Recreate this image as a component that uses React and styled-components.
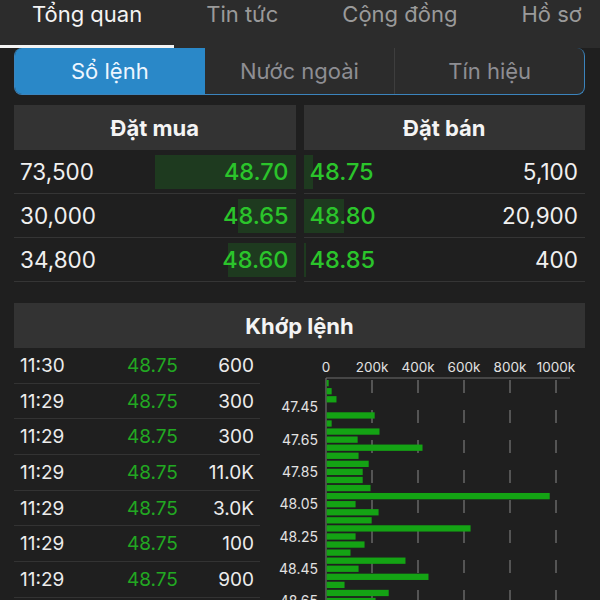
import styled, { createGlobalStyle } from "styled-components";

const GlobalStyle = createGlobalStyle`
  body {
    margin: 0;
    background: #1f1f1f;
    font-family: Inter, "Noto Sans", sans-serif;
    color: #f2f2f2;
  }
`;

const TABS = [
    { label: "Tổng quan", active: true },
    { label: "Tin tức" },
    { label: "Cộng đồng" },
    { label: "Hồ sơ" },
];

const SEGMENTS = [
    { label: "Sổ lệnh", active: true },
    { label: "Nước ngoài" },
    { label: "Tín hiệu" },
];

const BUY = [
    { qty: "73,500", price: "48.70", bar: 141 },
    { qty: "30,000", price: "48.65", bar: 58 },
    { qty: "34,800", price: "48.60", bar: 68 },
];

const SELL = [
    { qty: "5,100", price: "48.75", bar: 9 },
    { qty: "20,900", price: "48.80", bar: 40 },
    { qty: "400", price: "48.85", bar: 2 },
];

const TRADES = [
    ["11:30", "48.75", "600"],
    ["11:29", "48.75", "300"],
    ["11:29", "48.75", "300"],
    ["11:29", "48.75", "11.0K"],
    ["11:29", "48.75", "3.0K"],
    ["11:29", "48.75", "100"],
    ["11:29", "48.75", "900"],
];

// volume per price step (in k), from 47.30 upward by 0.05
const VOLUMES = [9, 22, 43, 0, 209, 22, 230, 135, 417, 139, 183, 157, 157, 191, 970, 126, 226, 196, 626, 126, 165, 104, 343, 139, 443, 78, 270, 213];
const X0 = 66;
const SCALE = 0.23;
const Y0 = 32;
const STEP = 8.07;
const BAR_H = 6.3;
const TICKS = [0, 200, 400, 600, 800, 1000];

const VolumeChart = () => (
    <StyledChart width="325" height="252" viewBox="0 0 325 252">
        {TICKS.map((t) => (
            <text key={t} x={X0 + t * SCALE} y="24" textAnchor="middle" fill="#e2e2e2" fontSize="13.5">
                {t === 0 ? "0" : `${t}k`}
            </text>
        ))}
        {TICKS.slice(1).map((t) => (
            <line key={t} x1={X0 + t * SCALE} x2={X0 + t * SCALE} y1="32" y2="252"
                stroke="#8a8a8a" strokeWidth="1" strokeDasharray="13 17" />
        ))}
        <line x1={X0} x2="310" y1="30" y2="30" stroke="#6e6e6e" strokeWidth="1.2" />
        <line x1={X0} x2={X0} y1="30" y2="252" stroke="#6e6e6e" strokeWidth="1.2" />
        {VOLUMES.map((v, i) => (
            <rect key={i} x={X0 + 0.6} y={Y0 + i * STEP} width={v * SCALE} height={BAR_H} fill="#14a314" />
        ))}
        {VOLUMES.map((v, i) => (i % 4 === 3 ? (
            <text key={i} x="58" y={Y0 + i * STEP + 8.2} textAnchor="end" fill="#e2e2e2" fontSize="14">
                {(47.3 + i * 0.05).toFixed(2)}
            </text>
        ) : null))}
    </StyledChart>
);

const App = () => {
    return (
        <StyledPage>
            <GlobalStyle />
            <StyledTabBar>
                {TABS.map((t) => (
                    <StyledTab key={t.label} className={t.active ? "active" : ""}>{t.label}</StyledTab>
                ))}
            </StyledTabBar>

            <StyledSegments>
                {SEGMENTS.map((s) => (
                    <StyledSegment key={s.label} className={s.active ? "active" : ""}>{s.label}</StyledSegment>
                ))}
            </StyledSegments>

            <StyledBook>
                <StyledPanel>
                    <StyledHeader>Đặt mua</StyledHeader>
                    {BUY.map((r) => (
                        <StyledBookRow key={r.price} $side="buy">
                            <StyledDepth $side="buy" style={{ width: r.bar }} />
                            <StyledQty>{r.qty}</StyledQty>
                            <StyledPrice>{r.price}</StyledPrice>
                        </StyledBookRow>
                    ))}
                </StyledPanel>
                <StyledPanel>
                    <StyledHeader>Đặt bán</StyledHeader>
                    {SELL.map((r) => (
                        <StyledBookRow key={r.price} $side="sell">
                            <StyledDepth $side="sell" style={{ width: r.bar }} />
                            <StyledPrice>{r.price}</StyledPrice>
                            <StyledQty>{r.qty}</StyledQty>
                        </StyledBookRow>
                    ))}
                </StyledPanel>
            </StyledBook>

            <StyledMatched>
                <StyledHeader>Khớp lệnh</StyledHeader>
                <StyledMatchedBody>
                    <StyledTrades>
                        {TRADES.map(([time, price, vol], i) => (
                            <StyledTradeRow key={i}>
                                <span>{time}</span>
                                <StyledTradePrice>{price}</StyledTradePrice>
                                <StyledTradeVol>{vol}</StyledTradeVol>
                            </StyledTradeRow>
                        ))}
                    </StyledTrades>
                    <VolumeChart />
                </StyledMatchedBody>
            </StyledMatched>
        </StyledPage>
    );
};

export default App;

const StyledPage = styled.div`
    width: 600px;
    height: 600px;
    overflow: hidden;
    background: #1f1f1f;
`;

const StyledTabBar = styled.div`
    display: flex;
    height: 48px;
    background: #2c2c2c;
    overflow: hidden;
`;

const StyledTab = styled.div`
    flex: none;
    box-sizing: border-box;
    height: 48px;
    padding: 0 32px;
    line-height: 28px;
    font-size: 22px;
    color: #9a9a9a;
    border-bottom: 3px solid transparent;

    &.active {
        color: #f4f4f4;
        border-bottom-color: #f4f4f4;
    }
`;

const StyledSegments = styled.div`
    display: grid;
    grid-template-columns: repeat(3, 1fr);
    height: 47px;
    margin: 0 15px 0 14px;
    box-sizing: border-box;
    background: #2c2c2c;
    border: 1.5px solid #3b84bd;
    border-top: none;
    border-radius: 8px;
    overflow: hidden;
`;

const StyledSegment = styled.div`
    display: flex;
    align-items: center;
    justify-content: center;
    font-size: 22px;
    color: #8e8e93;

    & + & {
        border-left: 1px solid #3e3e3e;
    }

    &.active {
        background: #2a88c8;
        color: #eef6ff;
    }

    &.active + & {
        border-left: none;
    }
`;

const StyledBook = styled.div`
    display: flex;
    gap: 8px;
    padding: 10px 15px 0 14px;
`;

const StyledPanel = styled.div`
    flex: 1;
    min-width: 0;
`;

const StyledHeader = styled.div`
    height: 45px;
    display: flex;
    align-items: center;
    justify-content: center;
    background: #333333;
    font-size: 22px;
    font-weight: 700;
    color: #f4f4f4;
`;

const StyledBookRow = styled.div`
    position: relative;
    box-sizing: border-box;
    height: 44px;
    display: flex;
    align-items: center;
    justify-content: space-between;
    padding: ${(p) => (p.$side === "buy" ? "0 7px 0 6px" : "0 7px 0 6px")};
    border-bottom: 1px solid #353535;
    font-size: 22.5px;
`;

const StyledDepth = styled.div`
    position: absolute;
    top: 5px;
    bottom: 4px;
    ${(p) => (p.$side === "buy" ? "right: 0;" : "left: 0;")}
    background: #1e3a1f;
`;

const StyledQty = styled.span`
    position: relative;
    color: #f0f0f0;
`;

const StyledPrice = styled.span`
    position: relative;
    color: #2bc42b;
    font-size: 23.5px;
    font-weight: 500;
`;

const StyledMatched = styled.div`
    margin: 21px 15px 0 14px;
`;

const StyledMatchedBody = styled.div`
    display: flex;
    margin-right: -15px;
`;

const StyledTrades = styled.div`
    width: 246px;
    flex: none;
`;

const StyledTradeRow = styled.div`
    box-sizing: border-box;
    height: 35.7px;
    display: grid;
    grid-template-columns: 107px 1fr auto;
    align-items: center;
    padding: 0 6px;
    border-bottom: 1px solid #333333;
    font-size: 19px;
    color: #ececec;
`;

const StyledTradePrice = styled.span`
    color: #22a822;
`;

const StyledTradeVol = styled.span`
    text-align: right;
`;

const StyledChart = styled.svg`
    display: block;
    flex: none;
    font-family: Inter, "Noto Sans", sans-serif;
`;
